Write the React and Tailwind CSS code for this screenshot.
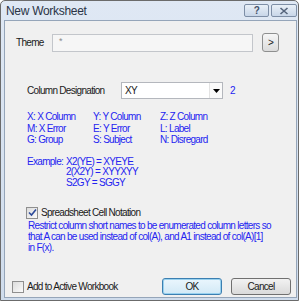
import { useState } from "react";

const blue = "text-[#2424f0]";

function Check({ checked, onChange }) {
  return (
    <button
      onClick={onChange}
      className="w-[12px] h-[12px] shrink-0 border border-[#8f8f8f] bg-gradient-to-br from-[#dcdcdc] to-[#fbfbfb] flex items-center justify-center p-0"
    >
      {checked && (
        <svg width="9" height="9" viewBox="0 0 9 9">
          <path d="M1 4.5 L3.5 7 L8 1.5" fill="none" stroke="#2c4a9a" strokeWidth="1.6" />
        </svg>
      )}
    </button>
  );
}

export default function App() {
  const [cellNotation, setCellNotation] = useState(true);
  const [addActive, setAddActive] = useState(false);

  return (
    <div
      className="w-[300px] h-[304px] bg-white text-[10px] tracking-[-0.7px] text-[#1a1a1a] whitespace-nowrap"
      style={{ fontFamily: '"Liberation Sans", Arial, sans-serif' }}
    >
      <div className="w-[299px] h-[301px] border border-[#6b6b6b] rounded-t-[5px] bg-gradient-to-b from-[#dfe8f4] to-[#cfdcec] flex flex-col">
        {/* TITLE BAR */}
        <div className="h-[19px] shrink-0 flex items-start justify-between pl-[5px] pr-[1px]">
          <span className="text-[12px] tracking-[-0.3px] leading-[20px] text-[#2a3446]">
            New Worksheet
          </span>
          <div className="flex gap-[2px] mt-[3px]">
            <div className="w-[25px] h-[13px] border border-[#7d8ea6] rounded-[2px] bg-gradient-to-b from-[#e9f0f8] to-[#c8d6e8] flex items-center justify-center text-[10px] leading-none font-bold text-[#44526a]">
              ?
            </div>
            <div className="w-[26px] h-[13px] border border-[#7d8ea6] rounded-[2px] bg-gradient-to-b from-[#e9f0f8] to-[#c8d6e8] flex items-center justify-center">
              <svg width="10" height="8" viewBox="0 0 10 8">
                <path d="M1.5 1 L8.5 7 M8.5 1 L1.5 7" stroke="#55647c" strokeWidth="1.6" />
              </svg>
            </div>
          </div>
        </div>

        {/* CONTENT */}
        <div className="flex-1 min-h-0 ml-[3px] mr-[1px] mb-[2px] border border-[#95a5b9] bg-[#f0f0f0] flex flex-col">
          {/* THEME */}
          <div className="flex items-center mt-[12px] pl-[11px]">
            <span className="w-[36px]">Theme</span>
            <div className="w-[201px] h-[18px] border border-[#c3c6cb] bg-[#f6f6f6] pl-[6px] text-[9px] leading-[12px] text-[#8a8a8a]">
              *
            </div>
            <button className="ml-[9px] w-[17px] h-[19px] border border-[#8e8f8f] rounded-[3px] bg-gradient-to-b from-[#f6f6f6] to-[#dcdcdc] text-[10px] leading-none flex items-center justify-center">
              &gt;
            </button>
          </div>

          {/* COLUMN DESIGNATION */}
          <div className="flex items-center mt-[30px] pl-[22px]">
            <span className="w-[94px]">Column Designation</span>
            <div className="w-[102px] h-[17px] border border-[#b4b7bd] bg-white flex items-center">
              <span className="flex-1 pl-[3px]">XY</span>
              <div className="w-[13px] h-full border-l border-[#e3e3e3] bg-[#fafafa] flex items-center justify-center">
                <svg width="7" height="4" viewBox="0 0 7 4">
                  <path d="M0 0 H7 L3.5 4 Z" fill="#000" />
                </svg>
              </div>
            </div>
            <span className={`ml-[7px] ${blue}`}>2</span>
          </div>

          {/* LEGEND */}
          <div className={`grid grid-cols-[66px_67px_auto] mt-[12px] pl-[22px] leading-[11.5px] ${blue}`}>
            <span>X: X Column</span>
            <span>Y: Y Column</span>
            <span>Z: Z Column</span>
            <span>M: X Error</span>
            <span>E: Y Error</span>
            <span>L: Label</span>
            <span>G: Group</span>
            <span>S: Subject</span>
            <span>N: Disregard</span>
          </div>

          {/* EXAMPLE */}
          <div className={`flex mt-[11px] pl-[22px] leading-[10.5px] ${blue}`}>
            <span className="w-[39px]">Example:</span>
            <div className="flex flex-col">
              <span>X2(YE) = XYEYE</span>
              <span>2(X2Y) = XYYXYY</span>
              <span>S2GY = SGGY</span>
            </div>
          </div>

          {/* CELL NOTATION */}
          <div className="flex items-center gap-[3px] mt-[18px] pl-[21px] h-[13px]">
            <Check checked={cellNotation} onChange={() => setCellNotation(!cellNotation)} />
            <span>Spreadsheet Cell Notation</span>
          </div>
          <p className={`mt-[1px] pl-[23px] leading-[11px] ${blue}`}>
            Restrict column short names to be enumerated column letters so
            <br />
            that A can be used instead of col(A), and A1 instead of col(A)[1]
            <br />
            in F(x).
          </p>

          {/* FOOTER */}
          <div className="mt-auto flex items-center pl-[7px] pr-[5px] pb-[2px]">
            <Check checked={addActive} onChange={() => setAddActive(!addActive)} />
            <span className="ml-[3px]">Add to Active Workbook</span>
            <button className="ml-auto w-[60px] h-[17px] border border-[#3c7fb1] rounded-[3px] bg-gradient-to-b from-[#eaf6fd] to-[#d2e9f6] shadow-[inset_0_0_0_1px_#98d1ef] leading-none">
              OK
            </button>
            <button className="ml-[9px] w-[60px] h-[17px] border border-[#707070] rounded-[3px] bg-gradient-to-b from-[#f2f2f2] to-[#dadada] leading-none">
              Cancel
            </button>
          </div>
        </div>
      </div>
    </div>
  );
}
